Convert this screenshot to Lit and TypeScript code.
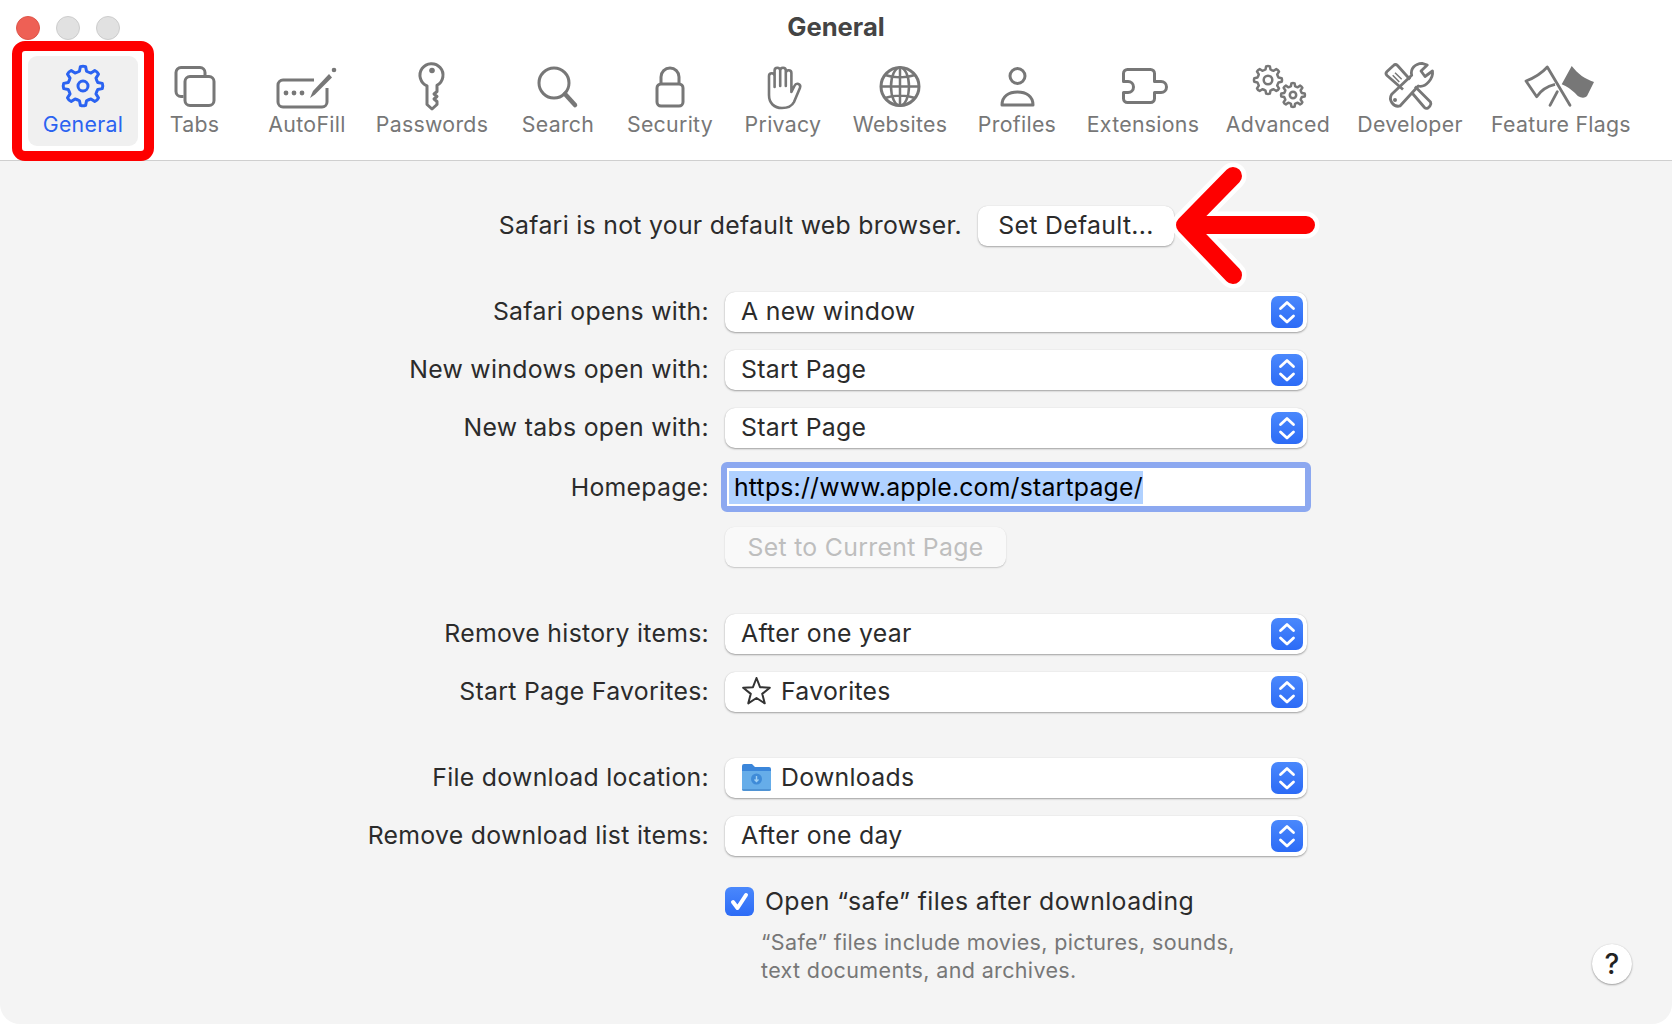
import { LitElement, html, css, svg } from "lit";
import { customElement } from "lit/decorators.js";

function gear(cx: number, cy: number, R: number, r: number, n: number): string {
  const pts: string[] = [];
  const step = (Math.PI * 2) / n;
  for (let i = 0; i < n; i++) {
    const a = i * step - Math.PI / 2;
    const p = (rad: number, off: number) =>
      `${(cx + rad * Math.cos(a + off * step)).toFixed(2)} ${(cy + rad * Math.sin(a + off * step)).toFixed(2)}`;
    pts.push(`${i === 0 ? "M" : "L"}${p(r, -0.3)}`);
    pts.push(`L${p(R, -0.17)}`);
    pts.push(`Q${p(R * 1.04, 0)} ${p(R, 0.17)}`);
    pts.push(`L${p(r, 0.3)}`);
    pts.push(`Q${p(r * 0.97, 0.5)} ${p(r, 0.7)}`);
  }
  return pts.join(" ") + " Z";
}

function star(cx: number, cy: number, R: number, r: number): string {
  const pts: string[] = [];
  for (let i = 0; i < 10; i++) {
    const a = -Math.PI / 2 + (i * Math.PI) / 5;
    const rad = i % 2 ? r : R;
    pts.push(`${(cx + rad * Math.cos(a)).toFixed(2)},${(cy + rad * Math.sin(a)).toFixed(2)}`);
  }
  return "M" + pts.join(" L") + " Z";
}

const ICONS: Record<string, unknown> = {
  General: svg`<path d=${gear(30, 26, 19.5, 15.2, 8)} stroke-width="3" stroke-linejoin="round"/><circle cx="30" cy="26" r="5" stroke-width="3"/>`,
  Tabs: svg`<path d="M18.500 36.500H16a5 5 0 0 1-5-5V12.500a5 5 0 0 1 5-5h19a5 5 0 0 1 5 5V16" /><rect x="20" y="16.500" width="29" height="29" rx="5"/>`,
  AutoFill: svg`<path d="M37 20H6a5 5 0 0 0-5 5v17a5 5 0 0 0 5 5h39a5 5 0 0 0 5-5V28"/>
    <circle class="f" cx="9" cy="33" r="2.400"/><circle class="f" cx="17" cy="33" r="2.400"/><circle class="f" cx="25" cy="33" r="2.400"/>
    <path class="f" d="M33 38l3-7 16-17 3 3.500-17 17z"/><circle class="f" cx="57" cy="10" r="2.300"/>`,
  Passwords: svg`<path d="M25 25.800V44.500l5 4.500 5-4.500v-3l-3-2.500 3-2.500-3-2.500 3-2.500v-6.200A11.500 11.500 0 1 0 25 25.800z" stroke-linejoin="round"/><circle class="f" cx="30" cy="10.500" r="2.800"/>`,
  Search: svg`<circle cx="26" cy="23" r="15"/><path d="M37 34l10 11" stroke-width="4.500" stroke-linecap="round"/>`,
  Security: svg`<rect x="17" y="24" width="26" height="22" rx="4"/><path d="M21 24v-7a9 9 0 0 1 18 0v7"/>`,
  Privacy: svg`<path stroke-width="2.600" stroke-linecap="round" stroke-linejoin="round" d="M16 30V16a2.800 2.800 0 0 1 5.600 0v11M21.600 16v-5.500a2.800 2.800 0 0 1 5.600 0V26M27.200 10.500a2.800 2.800 0 0 1 5.600 0V26M32.800 13a2.800 2.800 0 0 1 5.600 0v19l3-6c2-4 7-2 5.500 2L41 42c-2 4-7 6-12 6-8 0-13-5-13-13v-5"/>`,
  Websites: svg`<circle cx="30" cy="26.500" r="19"/><ellipse cx="30" cy="26.500" rx="9" ry="19" stroke-width="2.500"/><path stroke-width="2.500" d="M30 7.500v38M11 26.500h38M15 15c9 3 21 3 30 0M15 38c9-3 21-3 30 0"/>`,
  Profiles: svg`<circle cx="30.500" cy="16" r="7.500"/><path stroke-linejoin="round" d="M15 45c0-9 7-13 15.500-13S46 36 46 45z"/>`,
  Extensions: svg`<path stroke-linejoin="round" d="M14.500 9.500H37.500a4 4 0 0 1 4 4v8H48a5.500 5.500 0 0 1 0 11H41.500v6a4 4 0 0 1-4 4H14.500a4 4 0 0 1-4-4v-6H15a5.500 5.500 0 0 0 0-11H10.500v-8a4 4 0 0 1 4-4z"/>`,
  Advanced: svg`<path d=${gear(20, 20, 13.8, 10.8, 8)} stroke-width="2.500" stroke-linejoin="round"/><circle cx="20" cy="20" r="4.300" stroke-width="2.500"/>
    <path d=${gear(45, 35, 11.8, 9, 8)} stroke-width="2.500" stroke-linejoin="round"/><circle cx="45" cy="35" r="3.200" stroke-width="2.500"/>`,
  Developer: svg`<path stroke-linejoin="round" stroke-width="2.800" d="M11.700 34.300L31.700 15.300C30 9 35 3.500 42 3.300L47.300 5 41 11l4 5.500L52.500 11C53.500 18 46 28 38.300 26L20 46A7.800 7.800 0 0 1 11.700 34.300z"/><circle class="f" cx="15" cy="40" r="2"/>
    <path stroke-linejoin="round" stroke-width="2.800" d="M30 19.500L17.500 5.500q-2-2-4 0L7 11.500q-2 2 0 4L23 29.500M35 26.500L50.500 42q1 2-.5 4L48 48q-2 1-3.500-.5L31.700 32.500"/>
    <path stroke-width="1.500" d="M15 12.700l6.700 6.600M12.700 15.300l6.600 6.700"/>`,
  "Feature Flags": svg`<path stroke-linejoin="round" stroke-width="2.800" d="M16.300 7C10 14 3 18-5 21L5.700 36.700C10 30 17 26 24 24.300"/><path stroke-width="2.800" stroke-linecap="round" d="M16.300 7L39 45.300M19 45.300l7.300-13.600"/>
    <path class="f" d="M40.700 6C47 14 54 19 63 22L56 36C52 40 46 36 44 33 40 30 36 26 30.700 24.300z"/>`,
};

const TABS: [string, number][] = [
  ["General", 110], ["Tabs", 113], ["AutoFill", 112], ["Passwords", 138], ["Search", 114], ["Security", 110],
  ["Privacy", 116], ["Websites", 118], ["Profiles", 116], ["Extensions", 136], ["Advanced", 134], ["Developer", 130], ["Feature Flags", 172],
];

@customElement("app-root")
export class AppRoot extends LitElement {
  static styles = css`
    :host { display: block; }
    .page {
      position: relative; width: 1672px; height: 1024px; background: #fff; overflow: hidden;
      font-family: Inter, "Liberation Sans", sans-serif; color: #2b2b2b;
    }
    .header { height: 160px; background: #fff; border-bottom: 1px solid #cfcfcf; box-sizing: content-box; }
    .titlebar { height: 56px; display: grid; grid-template-columns: 1fr auto 1fr; align-items: center; }
    .lights { display: flex; gap: 16px; padding-left: 16px; align-items: center; }
    .light { width: 24px; height: 24px; border-radius: 50%; box-sizing: border-box; background: #e1e1e1; border: 1px solid #cdcdcd; }
    .light.red { background: #ee6055; border-color: #df5549; }
    .title { font-size: 25.6px; font-weight: 700; color: #444; padding-bottom: 3px; }
    .toolbar { display: grid; padding-left: 28px; grid-template-rows: 90px; width: fit-content; }
    .tab { display: flex; flex-direction: column; align-items: center; color: #777; box-sizing: border-box; padding-top: 4px; border-radius: 9px; }
    .tab.active { background: #f0f0f0; color: #2b63f1; }
    .tab svg { width: 60px; height: 50px; overflow: visible; fill: none; stroke: currentColor; stroke-width: 3; display: block; }
    .tab svg .f, .f { fill: currentColor; stroke: none; }
    .tab span { font-size: 21.3px; letter-spacing: 0.3px; line-height: 26px; margin-top: 1px; white-space: nowrap; }
    main { height: 863px; background: #f4f4f4; border-radius: 0 0 20px 20px; box-sizing: border-box; padding-top: 45px; font-size: 24.8px; letter-spacing: 0.3px; }
    .row { display: flex; align-items: center; height: 40px; margin-bottom: 18px; }
    .label { width: 709px; margin-right: 16px; text-align: right; white-space: nowrap; flex: none; padding-bottom: 2px; box-sizing: border-box; }
    .default { margin-bottom: 46px; }
    .default .label { width: 962px; padding-bottom: 2px; }
    .btn {
      height: 40px; border-radius: 9px; background: #fff; box-shadow: 0 1px 2px rgba(0,0,0,.32), 0 0 1px rgba(0,0,0,.12);
      display: flex; align-items: center; justify-content: center; box-sizing: border-box;
    }
    .default .btn { width: 196px; padding-bottom: 2px; }
    .select {
      width: 582px; height: 40px; border-radius: 10px; background: #fff; box-sizing: border-box;
      box-shadow: 0 1px 2px rgba(0,0,0,.34), 0 0 1px rgba(0,0,0,.14);
      display: flex; align-items: center; padding-left: 16px; justify-content: space-between; padding-right: 4px;
    }
    .val { display: flex; align-items: center; gap: 10px; padding-bottom: 2px; }
    .val svg { display: block; flex: none; margin-left: 1px; }
    .stepper { width: 32px; height: 32px; border-radius: 7px; background: linear-gradient(#4a88fc, #2c6bf6); flex: none; }
    .stepper svg { display: block; }
    .homepage { height: 50px; margin: -4px 0 15px; }
    .homepage .label { padding-bottom: 0; }
    .input {
      width: 590px; margin-left: -4px; height: 50px; box-sizing: border-box; border: 6px solid #8ca8f0; border-radius: 6px; background: #fff;
      display: flex; align-items: center; padding: 0 2px; color: #000; letter-spacing: 0.2px;
    }
    .sel { background: #b0d1ff; padding: 0 0 0 5px; height: 33px; line-height: 33px; display: block; }
    .cur { margin-bottom: 47px; }
    .cur .btn { width: 281px; margin-left: 725px; background: #f9f9f9; color: #bebebe; box-shadow: 0 1px 1.5px rgba(0,0,0,.18), 0 0 1px rgba(0,0,0,.08); }
    .fav { margin-bottom: 46px; }
    .check-row { display: flex; align-items: center; margin: 30px 0 0 725px; height: 30px; gap: 11px; letter-spacing: 0.4px; }
    .check { width: 29px; height: 29px; border-radius: 6px; background: linear-gradient(#4a88fc, #2c6bf6); flex: none; }
    .check svg { display: block; }
    .foot { display: flex; justify-content: space-between; align-items: flex-end; margin: 12px 0 0 761px; padding-right: 40px; }
    .help { font-size: 21.5px; letter-spacing: 0.35px; line-height: 28px; color: #777; }
    .q {
      width: 40px; height: 40px; border-radius: 50%; background: #fff; box-shadow: 0 1px 2px rgba(0,0,0,.35), 0 0 1px rgba(0,0,0,.15);
      display: flex; align-items: center; justify-content: center; font-size: 28px; font-weight: 500; color: #222; letter-spacing: 0;
    }
    .mark { position: absolute; left: 12px; top: 41px; width: 142px; height: 120px; box-sizing: border-box; border: 10px solid #fe0000; border-radius: 13px; }
    .arrow { position: absolute; left: 0; top: 0; width: 1672px; height: 1024px; pointer-events: none; }
  `;

  private chevrons() {
    return html`<div class="stepper"><svg width="32" height="32" viewBox="0 0 32 32" fill="none" stroke="#fff" stroke-width="2.800" stroke-linecap="round" stroke-linejoin="round"><path d="M9.500 12.500L16 6.500l6.500 6"/><path d="M9.500 20L16 26l6.500-6"/></svg></div>`;
  }

  private sel(label: string, value: unknown, cls = "") {
    return html`<div class="row ${cls}"><div class="label">${label}</div><div class="select"><div class="val">${value}</div>${this.chevrons()}</div></div>`;
  }

  render() {
    const starIcon = html`<svg width="29" height="28" viewBox="0 0 29 28"><path d=${star(14.5, 15, 14, 6)} fill="none" stroke="#333" stroke-width="2" stroke-linejoin="round"/></svg><span>Favorites</span>`;
    const folder = html`<svg width="29" height="28" viewBox="0 0 29 28"><path d="M0 3a2 2 0 0 1 2-2h8l3 3h14a2 2 0 0 1 2 2v6H0z" fill="#3b86da"/><path d="M0 8h29v18a2 2 0 0 1-2 2H2a2 2 0 0 1-2-2z" fill="#66ade9"/><path d="M0 26h29v0a2 2 0 0 1-2 2H2a2 2 0 0 1-2-2z" fill="#4f93d4"/><circle cx="14.500" cy="16" r="5.500" fill="#3f8bd8"/><path d="M14.500 13v5M12.500 16.500l2 2 2-2" fill="none" stroke="#9fd0f5" stroke-width="1.400"/></svg><span>Downloads</span>`;
    return html`
      <div class="page">
        <div class="header">
          <div class="titlebar">
            <div class="lights"><div class="light red"></div><div class="light"></div><div class="light"></div></div>
            <div class="title">General</div>
            <div></div>
          </div>
          <div class="toolbar" style="grid-template-columns:${TABS.map((t) => t[1] + "px").join(" ")}">
            ${TABS.map(([name], i) => html`<div class="tab ${i === 0 ? "active" : ""}"><svg viewBox="0 0 60 50">${ICONS[name]}</svg><span>${name}</span></div>`)}
          </div>
        </div>
        <main>
          <div class="row default"><div class="label">Safari is not your default web browser.</div><div class="btn">Set Default...</div></div>
          ${this.sel("Safari opens with:", "A new window")}
          ${this.sel("New windows open with:", "Start Page")}
          ${this.sel("New tabs open with:", "Start Page")}
          <div class="row homepage"><div class="label">Homepage:</div><div class="input"><span class="sel">https://www.apple.com/startpage/</span></div></div>
          <div class="row cur"><div class="btn">Set to Current Page</div></div>
          ${this.sel("Remove history items:", "After one year")}
          ${this.sel("Start Page Favorites:", starIcon, "fav")}
          ${this.sel("File download location:", folder)}
          ${this.sel("Remove download list items:", "After one day")}
          <div class="check-row">
            <div class="check"><svg width="29" height="29" viewBox="0 0 29 29" fill="none" stroke="#fff" stroke-width="4" stroke-linecap="round" stroke-linejoin="round"><path d="M8 15l4.500 6L21 8"/></svg></div>
            <div>Open “safe” files after downloading</div>
          </div>
          <div class="foot">
            <div class="help">“Safe” files include movies, pictures, sounds,<br />text documents, and archives.</div>
            <div class="q">?</div>
          </div>
        </main>
        <div class="mark"></div>
        <svg class="arrow" viewBox="0 0 1672 1024" fill="none" stroke-linecap="round" stroke-linejoin="round">
          <path d="M1233 176L1185 225l48 50M1187 225H1306" stroke="#fff" stroke-width="27"/>
          <path d="M1233 176L1185 225l48 50M1187 225H1306" stroke="#fe0000" stroke-width="18"/>
        </svg>
      </div>
    `;
  }
}
